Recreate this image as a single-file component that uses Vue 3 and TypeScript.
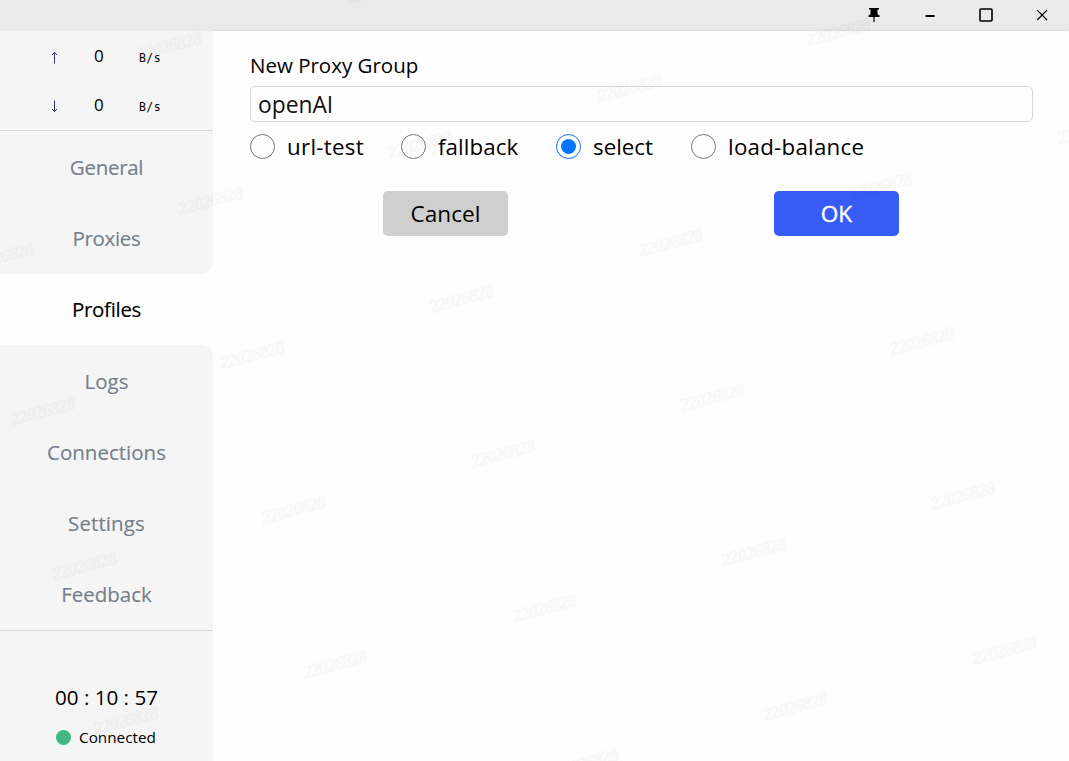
<script setup lang="ts">
import { ref } from 'vue'

interface NavItem {
  name: string
  cls: string
}

const navItems: NavItem[] = [
  { name: 'General', cls: 'general' },
  { name: 'Proxies', cls: 'proxies' },
  { name: 'Profiles', cls: 'profiles' },
  { name: 'Logs', cls: 'logs' },
  { name: 'Connections', cls: 'connections' },
  { name: 'Settings', cls: 'settings' },
  { name: 'Feedback', cls: 'feedback' },
]
const active = ref('Profiles')

const groupName = ref('openAI')
const types = ['url-test', 'fallback', 'select', 'load-balance']
const groupType = ref('select')

// Watermark stamps repeat on a slanted lattice across the window.
const stamps: { x: number; y: number }[] = []
for (let i = -3; i <= 8; i++) {
  for (let j = -4; j <= 5; j++) {
    const x = 629.3 + i * 41.5 - j * 209.3
    const y = 88 + i * 154.6 + j * 56.2
    if (x > -30 && x < 1100 && y > -15 && y < 775) stamps.push({ x, y })
  }
}
</script>

<template>
  <div class="window">
    <header class="titlebar">
      <button class="win-btn" aria-label="Pin">
        <svg width="12" height="16" viewBox="0 0 12 16">
          <path d="M1 1H11V2.6H9.5V7L11.5 8.6V10H6.6V15H5.4V10H.5V8.6L2.5 7V2.6H1Z" fill="#000" />
        </svg>
      </button>
      <button class="win-btn" aria-label="Minimize">
        <svg width="16" height="16" viewBox="0 0 16 16"><path d="M3.5 8h9v2h-9z" fill="#000" /></svg>
      </button>
      <button class="win-btn" aria-label="Maximize">
        <svg width="16" height="16" viewBox="0 0 16 16">
          <rect x="2" y="2" width="12" height="12" rx="1" fill="none" stroke="#000" stroke-width="1.6" />
        </svg>
      </button>
      <button class="win-btn" aria-label="Close">
        <svg width="16" height="16" viewBox="0 0 16 16">
          <path d="M3.2 3.2L13 13M13 3.2L3.2 13" fill="none" stroke="#000" stroke-width="1.2" />
        </svg>
      </button>
    </header>

    <div class="body">
      <aside class="sidebar">
        <section class="traffic">
          <div class="rate">
            <svg class="arrow" width="8" height="13" viewBox="0 0 8 13">
              <path d="M4.5 1.5V12.5M2 4L4.5 1.3L7 4" fill="none" stroke="#33337a" />
            </svg>
            <span class="num">0</span><span class="unit">B/s</span>
          </div>
          <div class="rate">
            <svg class="arrow" width="8" height="13" viewBox="0 0 8 13">
              <path d="M4.5 .5V11.5M2 9L4.5 11.7L7 9" fill="none" stroke="#33337a" />
            </svg>
            <span class="num">0</span><span class="unit">B/s</span>
          </div>
        </section>
        <nav class="nav">
          <div
            v-for="item in navItems"
            :key="item.name"
            class="nav-item"
            :class="[item.cls, { active: item.name === active }]"
            @click="active = item.name"
          >
            <span>{{ item.name }}</span>
          </div>
        </nav>
        <section class="status">
          <div class="timer">00 : 10 : 57</div>
          <div class="conn"><i class="dot"></i><span>Connected</span></div>
        </section>
      </aside>

      <main class="main">
        <div class="title"><span>New Proxy Group</span></div>
        <input v-model="groupName" class="field" type="text" spellcheck="false" />
        <div class="radios">
          <label v-for="t in types" :key="t" class="radio" @click="groupType = t">
            <i class="ring" :class="{ on: t === groupType }"></i>
            <span :class="t">{{ t }}</span>
          </label>
        </div>
        <div class="actions">
          <button class="btn cancel">Cancel</button>
          <button class="btn ok">OK</button>
        </div>
      </main>
    </div>

    <svg class="stamps" width="1069" height="761" viewBox="0 0 1069 761">
      <text
        v-for="(s, k) in stamps"
        :key="k"
        :transform="`translate(${s.x} ${s.y}) rotate(-15)`"
        y="6"
        text-anchor="middle"
        textLength="66"
      >22026828</text>
    </svg>
  </div>
</template>

<style>
html,
body {
  margin: 0;
  overflow: hidden;
}
</style>

<style scoped>
.window {
  position: relative;
  display: flex;
  flex-direction: column;
  width: 1069px;
  height: 761px;
  overflow: hidden;
  background: #fefefe;
  color: #000;
  font-family: "Open Sans", "Noto Sans", sans-serif;
}
.titlebar {
  display: flex;
  justify-content: flex-end;
  box-sizing: border-box;
  height: 31px;
  flex: none;
  background: #eaeaea;
}
.win-btn {
  display: flex;
  align-items: center;
  justify-content: center;
  width: 56px;
  height: 30px;
  padding: 0;
  border: 0;
  background: none;
}
.win-btn:last-child {
  width: 54px;
  margin-left: 1px;
}
.body {
  display: flex;
  flex: 1;
  min-height: 0;
}
.sidebar {
  display: flex;
  flex-direction: column;
  width: 213px;
  flex: none;
}
.traffic {
  box-sizing: border-box;
  height: 100px;
  padding-top: 1px;
  background: #f5f5f5;
  border-bottom: 1px solid #d9d9d9;
}
.rate {
  display: flex;
  align-items: center;
  height: 49px;
  padding-left: 50px;
}
.arrow {
  margin-top: 1px;
}
.num {
  width: 10px;
  margin-left: 36px;
  font-size: 17px;
  line-height: 20px;
  transform: translateY(-1px);
}
.unit {
  margin: 2px 0 0 35px;
  font-family: "DejaVu Sans Mono", monospace;
  font-size: 11.5px;
  line-height: 16px;
  letter-spacing: 0.4px;
}
.nav {
  display: flex;
  flex-direction: column;
  background: #fefefe;
}
.nav-item {
  display: flex;
  align-items: center;
  justify-content: center;
  height: 71.3px;
  background: #f5f5f5;
  color: #757f8b;
  font-size: 20.5px;
  line-height: 28px;
  cursor: default;
}
.nav-item span {
  -webkit-text-stroke: 0.15px currentColor;
}
.general,
.proxies,
.profiles {
  letter-spacing: -0.3px;
}
.settings {
  letter-spacing: 0.1px;
}
.nav-item.proxies {
  border-bottom-right-radius: 12px;
}
.nav-item.logs {
  border-top-right-radius: 12px;
}
.nav-item.active {
  background: #fefefe;
  color: #000;
}
.status {
  flex: 1;
  background: #f5f5f5;
  border-top: 1px solid #d9d9d9;
}
.timer {
  margin-top: 52px;
  text-align: center;
  font-size: 20.6px;
  line-height: 28px;
}
.conn {
  display: flex;
  align-items: center;
  gap: 8px;
  margin-top: 15px;
  padding-left: 56px;
  font-size: 15.3px;
  line-height: 22px;
}
.dot {
  width: 15px;
  height: 15px;
  border-radius: 50%;
  background: #41b883;
}
.main {
  flex: 1;
  box-sizing: border-box;
  padding: 19px 36px 0 37px;
  box-shadow: 0 0 3px rgba(0, 0, 0, 0.12);
  clip-path: inset(-4px 0 0 0);
}
.title {
  height: 36px;
  font-size: 20.5px;
  line-height: 30px;
}
.field {
  display: block;
  box-sizing: border-box;
  width: 783px;
  height: 36px;
  padding: 1px 7px 0;
  border: 1px solid #d9d9d9;
  border-radius: 5px;
  outline: 0;
  background: transparent;
  color: #111;
  font: 22.8px "Open Sans", "Noto Sans", sans-serif;
}
.radios {
  display: grid;
  grid-template-columns: 151px 155px 135px auto;
  height: 50px;
}
.radio {
  display: flex;
  align-items: center;
  gap: 12px;
  height: 49px;
  font-size: 22.3px;
  line-height: 30px;
}
.url-test {
  letter-spacing: 0.3px;
}
.fallback {
  letter-spacing: 0.1px;
}
.load-balance {
  letter-spacing: 0.25px;
}
.ring {
  display: flex;
  align-items: center;
  justify-content: center;
  box-sizing: border-box;
  width: 25px;
  height: 25px;
  border: 1.4px solid #767676;
  border-radius: 50%;
}
.ring.on {
  border-color: #0075ff;
}
.ring.on::after {
  content: "";
  width: 15px;
  height: 15px;
  border-radius: 50%;
  background: #0075ff;
}
.actions {
  display: flex;
  justify-content: space-between;
  margin: 19px 134px 0 133px;
}
.btn {
  width: 125px;
  height: 45px;
  padding: 0;
  border: 0;
  border-radius: 5px;
  font: 22.6px/44px "Open Sans", "Noto Sans", sans-serif;
}
.cancel {
  background: #cfcfcf;
  color: #000;
}
.ok {
  background: #375cf6;
  color: #fff;
  -webkit-text-stroke: 0.4px #fff;
}
.stamps {
  position: absolute;
  left: 0;
  top: 0;
  pointer-events: none;
  fill: #000;
  stroke: #000;
  stroke-width: 0.9px;
  opacity: 0.021;
  font: italic bold 18px "Liberation Serif", serif;
}
</style>
